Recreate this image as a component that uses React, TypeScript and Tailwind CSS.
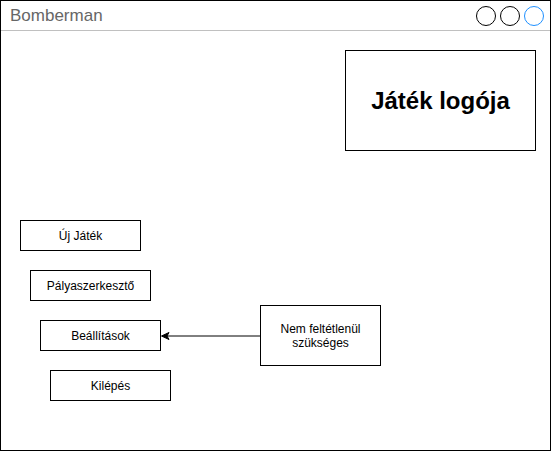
import React from 'react';

const MenuButton: React.FC<{ label: string; offset: string }> = ({ label, offset }) => (
  <div className={`${offset} w-[121px] h-[31px] border border-black flex items-center justify-center text-[12px] text-black shrink-0`}>
    {label}
  </div>
);

const ArrowLeft: React.FC = () => (
  <svg width="99" height="10" viewBox="0 0 99 10" className="shrink-0 block">
    <line x1="6" y1="5" x2="99" y2="5" stroke="black" strokeWidth="1" />
    <path d="M0.5 5 L8 1.5 L6 5 L8 8.5 Z" fill="black" stroke="black" strokeWidth="1" strokeLinejoin="miter" />
  </svg>
);

export default function App() {
  return (
    <div className="w-[551px] h-[451px] bg-white border border-black flex flex-col font-['Liberation_Sans',Arial,sans-serif]">
      {/* window title bar */}
      <div className="h-[30px] border-b border-[#c0c0c0] flex items-center justify-between pl-[9px] pr-[6px] shrink-0">
        <span className="text-[17px] text-[#666666] leading-none">Bomberman</span>
        <div className="flex gap-[4px]">
          <span className="w-[20px] h-[20px] rounded-full border border-black" />
          <span className="w-[20px] h-[20px] rounded-full border border-black" />
          <span className="w-[20px] h-[20px] rounded-full border border-[#1e90ff]" />
        </div>
      </div>

      {/* logo */}
      <div className="flex justify-end pr-[14px] pt-[19px]">
        <div className="w-[191px] h-[101px] border border-black flex items-center justify-center">
          <span className="text-[24px] font-bold text-black">Játék logója</span>
        </div>
      </div>

      {/* menu */}
      <div className="flex flex-col gap-[19px] mt-[69px]">
        <MenuButton label="Új Játék" offset="ml-[19px]" />
        <MenuButton label="Pályaszerkesztő" offset="ml-[29px]" />
        <div className="flex items-center h-[31px]">
          <MenuButton label="Beállítások" offset="ml-[39px]" />
          <ArrowLeft />
          <div className="w-[121px] h-[61px] border border-black flex items-center justify-center text-center text-[12px] leading-[14px] text-black shrink-0">
            Nem feltétlenül
            <br />
            szükséges
          </div>
        </div>
        <MenuButton label="Kilépés" offset="ml-[49px]" />
      </div>
    </div>
  );
}
